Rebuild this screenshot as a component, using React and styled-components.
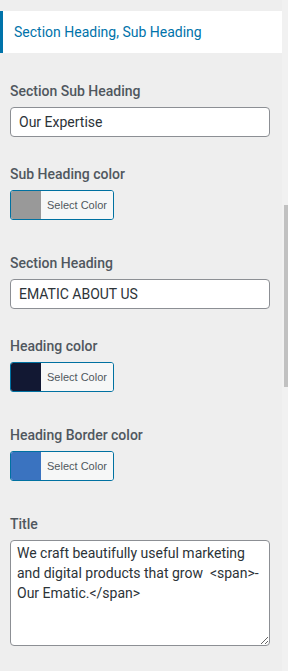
import styled, { createGlobalStyle } from 'styled-components'

const GlobalStyle = createGlobalStyle`
  html, body { margin: 0; padding: 0; background: #eeeeee; }
  body { font-family: Roboto, "Noto Sans", "Liberation Sans", sans-serif; }
  * { box-sizing: border-box; }
`

const Frame = styled.div`
  display: flex;
  width: 288px;
  height: 671px;
  overflow: hidden;
  background: #eeeeee;
`

const Panel = styled.div`
  width: 282px;
  padding-top: 11px;
`

const SectionTitle = styled.h3`
  margin: 0;
  height: 42px;
  background: #ffffff;
  border-left: 3px solid #0073aa;
  padding-left: 11px;
  display: flex;
  align-items: center;
  font-size: 14px;
  font-weight: 400;
  color: #0073aa;
`

const Controls = styled.div`
  padding: 28px 12px 0 10px;
  display: flex;
  flex-direction: column;
`

const Control = styled.div`
  display: flex;
  flex-direction: column;
  margin-bottom: ${p => (p.$picker ? '33px' : '27px')};
`

const Label = styled.label`
  font-size: 14px;
  line-height: 20px;
  font-weight: 500;
  color: #50575e;
  margin-bottom: 6px;
`

const TextInput = styled.input`
  width: 260px;
  height: 30px;
  padding: 0 8px;
  border: 1px solid #8c8f94;
  border-radius: 4px;
  background: #ffffff;
  font-family: inherit;
  font-size: 14px;
  color: #2c3338;
  outline: none;
`

const TextArea = styled.textarea`
  width: 260px;
  height: 106px;
  padding: 2px 6px;
  border: 1px solid #8c8f94;
  border-radius: 4px;
  background: #ffffff;
  font-family: inherit;
  font-size: 14px;
  line-height: 20px;
  color: #2c3338;
  outline: none;
`

const ColorButton = styled.button`
  display: flex;
  width: 104px;
  height: 30px;
  padding: 0;
  border: 1px solid #0071a1;
  border-radius: 3px;
  overflow: hidden;
  background: #f6f7f7;
  cursor: pointer;
`

const Swatch = styled.span`
  width: 30px;
  height: 100%;
  background: ${p => p.$color};
`

const ButtonText = styled.span`
  flex: 1;
  display: flex;
  align-items: center;
  padding-left: 6px;
  font-family: inherit;
  font-size: 11px;
  color: #50575e;
  background: #f6f7f7;
`

const Track = styled.div`
  width: 6px;
  background: #f1f1f1;
  padding-top: 205px;
  display: flex;
  justify-content: flex-end;
`

const Thumb = styled.div`
  width: 4px;
  height: 182px;
  background: #c1c1c1;
`

const ColorControl = ({ label, color }) => (
  <Control $picker>
    <Label>{label}</Label>
    <ColorButton type="button">
      <Swatch $color={color} />
      <ButtonText>Select Color</ButtonText>
    </ColorButton>
  </Control>
)

export default function App() {
  return (
    <>
      <GlobalStyle />
      <Frame>
        <Panel>
          <SectionTitle>Section Heading, Sub Heading</SectionTitle>
          <Controls>
            <Control>
              <Label>Section Sub Heading</Label>
              <TextInput defaultValue="Our Expertise" />
            </Control>
            <ColorControl label="Sub Heading color" color="#999999" />
            <Control>
              <Label>Section Heading</Label>
              <TextInput defaultValue="EMATIC ABOUT US" />
            </Control>
            <ColorControl label="Heading color" color="#121833" />
            <ColorControl label="Heading Border color" color="#3a73c0" />
            <Control>
              <Label>Title</Label>
              <TextArea defaultValue="We craft beautifully useful marketing and digital products that grow  <span>- Our Ematic.</span>" />
            </Control>
          </Controls>
        </Panel>
        <Track>
          <Thumb />
        </Track>
      </Frame>
    </>
  )
}
